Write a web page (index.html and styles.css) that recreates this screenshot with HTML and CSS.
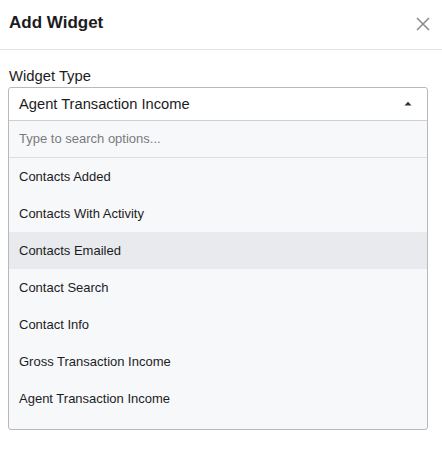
FILE: index.html
```html
<!DOCTYPE html>
<html>
<head>
<meta charset="utf-8">
<link rel="stylesheet" href="styles.css">
</head>
<body>
<div class="dialog">
  <div class="header">
    <div class="title">Add Widget</div>
    <button class="close" aria-label="Close">
      <svg width="14" height="14" viewBox="0 0 14 14"><path d="M1 1L13 13M13 1L1 13" stroke="#8a8a8a" stroke-width="1.5" fill="none"/></svg>
    </button>
  </div>
  <div class="content">
    <div class="label">Widget Type</div>
    <div class="select">
      <div class="selected">
        <span>Agent Transaction Income</span>
        <svg class="caret" width="8" height="5" viewBox="0 0 8 5"><path d="M0.5 4.5L4 0.8L7.5 4.5Z" fill="#333"/></svg>
      </div>
      <div class="search">Type to search options...</div>
      <div class="options">
        <div class="option">Contacts Added</div>
        <div class="option">Contacts With Activity</div>
        <div class="option active">Contacts Emailed</div>
        <div class="option">Contact Search</div>
        <div class="option">Contact Info</div>
        <div class="option">Gross Transaction Income</div>
        <div class="option">Agent Transaction Income</div>
      </div>
    </div>
  </div>
</div>
</body>
</html>
```
FILE: styles.css
```css
html, body {
  margin: 0;
  padding: 0;
  background: #fff;
}
body {
  font-family: "Liberation Sans", Arial, sans-serif;
  color: #1c1c1e;
}
.header {
  height: 49px;
  border-bottom: 1px solid #e3e3ea;
  display: flex;
  align-items: center;
  justify-content: space-between;
  padding: 0 12px 0 9px;
}
.title {
  font-size: 17px;
  font-weight: 700;
  margin-top: -4px;
}
.close {
  border: 0;
  background: none;
  padding: 0;
  width: 14px;
  height: 14px;
  margin-top: -2px;
  display: flex;
}
.content {
  padding: 16px 14px 0 8px;
}
.label {
  font-size: 14.8px;
  line-height: 20px;
  padding-left: 1px;
  margin-bottom: 1px;
}
.select {
  border: 1px solid #b9b9bd;
  border-radius: 3px;
  background: #f7f8fa;
  padding-bottom: 12px;
}
.selected {
  height: 32px;
  background: #fff;
  border-radius: 3px 3px 0 0;
  border-bottom: 1px solid #cfcfd3;
  display: flex;
  align-items: center;
  justify-content: space-between;
  padding: 0 15px 0 10px;
  font-size: 14.7px;
}
.caret {
  margin-top: -2px;
}
.search {
  height: 36px;
  line-height: 36px;
  border-bottom: 1px solid #dedee2;
  padding-left: 10px;
  font-size: 13px;
  color: #7a7a80;
}
.option {
  height: 37px;
  line-height: 37px;
  padding-left: 10px;
  font-size: 13px;
}
.option.active {
  background: #e8eaed;
}
```
